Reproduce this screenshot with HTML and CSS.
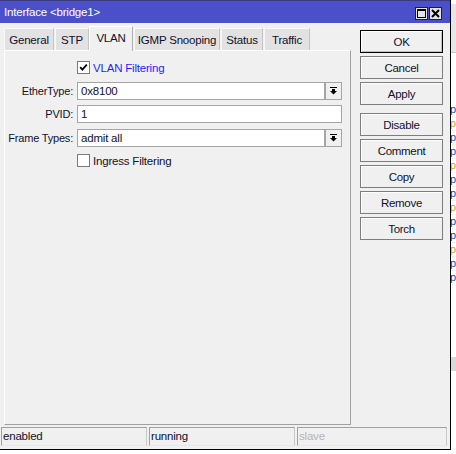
FILE: index.html
```html
<!DOCTYPE html>
<html>
<head>
<meta charset="utf-8">
<link rel="stylesheet" href="styles.css">
</head>
<body>
<div class="desktop">
  <div class="window">
    <div class="titlebar">
      <span class="title">Interface &lt;bridge1&gt;</span>
      <div class="tb-btns">
        <span class="tb-btn"><svg width="11" height="11" viewBox="0 0 11 11"><rect x="1.5" y="1.5" width="8" height="8" fill="none" stroke="#000" stroke-width="1"/><rect x="1" y="1" width="9" height="2" fill="#000"/></svg></span>
        <span class="tb-btn"><svg width="11" height="11" viewBox="0 0 11 11"><path d="M2 2 L9 9 M9 2 L2 9" stroke="#000" stroke-width="2"/></svg></span>
      </div>
    </div>
    <div class="main">
      <div class="left">
        <div class="tabs">
          <div class="tab t-general">General</div>
          <div class="tab t-stp">STP</div>
          <div class="tab t-vlan active">VLAN</div>
          <div class="tab t-igmp">IGMP Snooping</div>
          <div class="tab t-status">Status</div>
          <div class="tab t-traffic">Traffic</div>
        </div>
        <div class="panel">
          <div class="check-row first">
            <span class="cb"><svg width="11" height="11" viewBox="0 0 11 11"><path d="M2.2 5.2 L4.4 7.6 L8.8 2.6" fill="none" stroke="#000" stroke-width="1.8"/></svg></span>
            <span class="cb-label blue">VLAN Filtering</span>
          </div>
          <div class="field f1">
            <span class="lbl">EtherType:</span>
            <div class="input">0x8100</div>
            <div class="dd"><svg width="7" height="8" viewBox="0 0 7 8"><rect x="0" y="0" width="7" height="1" fill="#000"/><rect x="2" y="2" width="3" height="2" fill="#000"/><polygon points="0,4 7,4 3.5,7.5" fill="#000"/></svg></div>
          </div>
          <div class="field f2">
            <span class="lbl">PVID:</span>
            <div class="input wide">1</div>
          </div>
          <div class="field f3">
            <span class="lbl">Frame Types:</span>
            <div class="input">admit all</div>
            <div class="dd"><svg width="7" height="8" viewBox="0 0 7 8"><rect x="0" y="0" width="7" height="1" fill="#000"/><rect x="2" y="2" width="3" height="2" fill="#000"/><polygon points="0,4 7,4 3.5,7.5" fill="#000"/></svg></div>
          </div>
          <div class="check-row last">
            <span class="cb"></span>
            <span class="cb-label">Ingress Filtering</span>
          </div>
        </div>
      </div>
      <div class="buttons">
        <div class="btn default">OK</div>
        <div class="btn">Cancel</div>
        <div class="btn">Apply</div>
        <div class="btn sep">Disable</div>
        <div class="btn">Comment</div>
        <div class="btn">Copy</div>
        <div class="btn">Remove</div>
        <div class="btn">Torch</div>
      </div>
    </div>
    <div class="statusbar">
      <div class="cell c1">enabled</div>
      <div class="cell c2">running</div>
      <div class="cell c3 dim">slave</div>
    </div>
  </div>
  <div class="strip">
    <div class="s-head"></div>
    <div class="s-list">
      <div class="s-row">p</div><div class="s-row o">p</div><div class="s-row">p</div><div class="s-row">p</div>
      <div class="s-row o">p</div><div class="s-row">p</div><div class="s-row">p</div><div class="s-row o">p</div>
      <div class="s-row">p</div><div class="s-row">p</div><div class="s-row o">p</div><div class="s-row">p</div>
      <div class="s-row">p</div>
    </div>
    <div class="s-band"></div>
  </div>
</div>
</body>
</html>
```

FILE: styles.css
```css
html, body {
  margin: 0;
  padding: 0;
  background: #ffffff;
  width: 456px;
  height: 454px;
  overflow: hidden;
}

body {
  font-family: "Liberation Sans", Arial, sans-serif;
  font-size: 11px;
  letter-spacing: -0.2px;
  color: #10102a;
}

.desktop {
  display: flex;
  align-items: flex-start;
}

.window {
  width: 450px;
  height: 449px;
  background: #f0f0f0;
  border-right: 1px solid #000;
  border-bottom: 1px solid #000;
  display: flex;
  flex-direction: column;
  flex-shrink: 0;
}

/* title bar */
.titlebar {
  height: 23px;
  background: #4b4fc9;
  border-top: 1px solid #3a3a80;
  box-sizing: border-box;
  display: flex;
  align-items: center;
  padding-left: 4px;
  padding-right: 8px;
}

.title {
  color: #ffffff;
  font-size: 11.5px;
}

.tb-btns {
  margin-left: auto;
  display: flex;
  gap: 1px;
  padding-top: 2px;
}

.tb-btn {
  width: 13px;
  height: 13px;
  box-sizing: border-box;
  background: #e4e4e4;
  border: 1px solid #202020;
  display: flex;
  align-items: center;
  justify-content: center;
}

.tb-btn svg {
  display: block;
}

/* main area */
.main {
  display: flex;
  padding: 3px 0 0 4px;
}

.left {
  width: 347px;
  display: flex;
  flex-direction: column;
}

.tabs {
  height: 24px;
  display: flex;
  align-items: flex-end;
  gap: 1px;
  position: relative;
  z-index: 1;
}

.tab {
  height: 22px;
  box-sizing: border-box;
  background: #e2e2e2;
  border-top: 1px solid #f8f8f8;
  border-left: 1px solid #f8f8f8;
  border-right: 1px solid #c4c4c4;
  display: flex;
  align-items: center;
  justify-content: center;
  padding-top: 1px;
  font-size: 11.5px;
}

.tab.active {
  height: 25px;
  margin-bottom: -1px;
  background: #f0f0f0;
  border-top: 1px solid #ffffff;
  border-left: 1px solid #ffffff;
  border-right: 1px solid #b0b0b0;
  margin-left: -1px;
  padding-bottom: 3px;
}

.t-general { width: 50px; }
.t-stp { width: 34px; }
.t-vlan { width: 44px; }
.t-igmp { width: 86px; }
.t-status { width: 42px; }
.t-traffic { width: 46px; }

.panel {
  height: 375px;
  box-sizing: border-box;
  border-top: 1px solid #ffffff;
  border-left: 1px solid #ffffff;
  border-right: 1px solid #a0a0a0;
  border-bottom: 1px solid #a0a0a0;
  display: flex;
  flex-direction: column;
}

.check-row {
  display: flex;
  align-items: center;
  margin-left: 72px;
  height: 13px;
}

.check-row.first {
  margin-top: 10px;
}

.check-row.last {
  margin-top: 7px;
}

.cb {
  width: 13px;
  height: 13px;
  box-sizing: border-box;
  background: #ffffff;
  border: 1px solid #7a7a7a;
  display: flex;
  align-items: center;
  justify-content: center;
}

.cb svg {
  display: block;
}

.cb-label {
  margin-left: 3px;
  font-size: 11.5px;
}

.blue {
  color: #1f1fff;
}

.field {
  display: flex;
  height: 18px;
}

.f1 { margin-top: 8px; }
.f2 { margin-top: 5px; }
.f3 { margin-top: 6px; }

.lbl {
  width: 72px;
  box-sizing: border-box;
  padding-right: 4px;
  text-align: right;
  line-height: 18px;
  font-size: 11px;
}

.input {
  width: 248px;
  height: 18px;
  box-sizing: border-box;
  background: #ffffff;
  border: 1px solid #a5a5a5;
  padding-left: 3px;
  line-height: 16px;
  font-size: 11.5px;
}

.input.wide {
  width: 265px;
}

.dd {
  width: 17px;
  height: 18px;
  box-sizing: border-box;
  background: #f0f0f0;
  border: 1px solid #a5a5a5;
  display: flex;
  align-items: center;
  justify-content: center;
}

.dd svg {
  display: block;
}

/* buttons */
.buttons {
  margin-left: 9px;
  margin-top: 4px;
  width: 83px;
  display: flex;
  flex-direction: column;
  gap: 3px;
}

.btn {
  height: 23px;
  box-sizing: border-box;
  border: 1px solid #7d7d7d;
  box-shadow: inset 1px 1px 0 #ffffff;
  background: #f0f0f0;
  display: flex;
  align-items: center;
  justify-content: center;
  font-size: 11.5px;
  letter-spacing: -0.3px;
}

.btn.default {
  border: 1px solid #000;
  box-shadow: inset 1px 1px 0 #ffffff, inset -1px -1px 0 #c0c0c0;
}

.btn.sep {
  margin-top: 5px;
}

/* status bar */
.statusbar {
  margin-top: 2px;
  padding-left: 1px;
  display: flex;
  gap: 2px;
  height: 19px;
}

.cell {
  height: 19px;
  box-sizing: border-box;
  border-top: 1px solid #a0a0a0;
  border-left: 1px solid #a0a0a0;
  border-right: 1px solid #c8c8c8;
  border-bottom: 1px solid #e8e8e8;
  padding-left: 1px;
  line-height: 17px;
  font-size: 11.5px;
}

.c1 { width: 146px; }
.c2 { width: 146px; }
.c3 { width: 150px; }

.dim {
  color: #b4b4b4;
}

/* background strip to the right of the window */
.strip {
  width: 5px;
  height: 454px;
  overflow: hidden;
  display: flex;
  flex-direction: column;
  background: #ffffff;
}

.s-head {
  height: 48px;
  background: #e6e6e6;
  border-bottom: 1px solid #c8c8c8;
  margin-top: 4px;
}

.s-list {
  margin-top: 50px;
  display: flex;
  flex-direction: column;
}

.s-row {
  height: 13px;
  line-height: 13px;
  font-size: 11px;
  color: #1a3cc8;
  border-bottom: 1px solid #f0f0f0;
  margin-left: -1px;
}

.s-row.o {
  color: #d0a020;
}

.s-band {
  margin-top: 72px;
  height: 14px;
  background: #d8d8d8;
}
```
